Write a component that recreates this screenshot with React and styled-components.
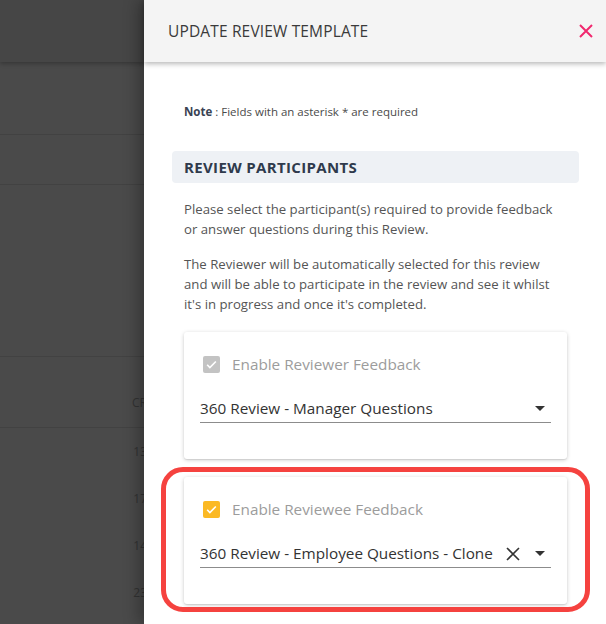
import React from "react";
import styled, { createGlobalStyle } from "styled-components";

const Global = createGlobalStyle`
  html, body { margin: 0; padding: 0; }
  body {
    width: 606px;
    height: 624px;
    overflow: hidden;
    font-family: "Open Sans", "Noto Sans", sans-serif;
    background: #4a4a4a;
  }
  * { box-sizing: border-box; }
`;

const Screen = styled.div`
  display: flex;
  width: 606px;
  height: 624px;
  overflow: hidden;
`;

const Backdrop = styled.div`
  width: 144px;
  flex: none;
  display: flex;
  flex-direction: column;
  background: #4a4a4a;
`;

const BgRow = styled.div`
  height: ${(p) => p.$h}px;
  flex: none;
  border-bottom: 1px solid ${(p) => (p.$line ? "#424242" : "transparent")};
  background: ${(p) => p.$bg || "transparent"};
  box-shadow: ${(p) => (p.$shadow ? "0 2px 4px rgba(0,0,0,0.25)" : "none")};
  display: flex;
  align-items: center;
  justify-content: flex-end;
  padding-top: ${(p) => p.$pt || 0}px;
  font-size: 12px;
  color: #3a3a3a;
  overflow: hidden;
  white-space: nowrap;
`;

const BgText = styled.span`
  margin-right: -3px;
  color: #333;
`;

const Drawer = styled.div`
  flex: 1;
  background: #fff;
  display: flex;
  flex-direction: column;
  box-shadow: -6px 0 14px rgba(0, 0, 0, 0.28);
  position: relative;
  z-index: 1;
`;

const Header = styled.div`
  height: 62px;
  flex: none;
  background: #f4f4f4;
  display: flex;
  align-items: center;
  justify-content: space-between;
  padding: 0 8px 0 24px;
  box-shadow: 0 2px 5px rgba(0, 0, 0, 0.28);
  position: relative;
  z-index: 1;
`;

const Title = styled.h1`
  margin: 0;
  font-size: 15.5px;
  font-weight: 400;
  color: #3a3a3a;
  letter-spacing: 0.15px;
`;

const CloseBtn = styled.button`
  border: 0;
  background: none;
  padding: 0;
  width: 24px;
  height: 24px;
  display: flex;
  align-items: center;
  justify-content: center;
  cursor: pointer;
`;

const Body = styled.div`
  padding: 41px 27px 0 28px;
  display: flex;
  flex-direction: column;
`;

const Note = styled.p`
  margin: 0 0 0 12px;
  font-size: 11.5px;
  line-height: 17px;
  color: #4a4a4a;
  b { color: #3a4354; font-weight: 700; }
`;

const SectionHead = styled.div`
  margin-top: 31px;
  height: 32px;
  background: #eef1f5;
  border-radius: 4px;
  display: flex;
  align-items: center;
  padding-left: 12px;
  font-size: 15px;
  font-weight: 700;
  color: #2f3a4c;
  letter-spacing: 0.35px;
`;

const Para = styled.p`
  margin: ${(p) => p.$mt}px 0 0 12px;
  max-width: 374px;
  font-size: 13.2px;
  line-height: 20px;
  color: #555;
`;

const Cards = styled.div`
  margin: 18px 12px 0 12px;
  display: flex;
  flex-direction: column;
  gap: 18px;
`;

const Card = styled.div`
  position: relative;
  height: 127px;
  background: #fff;
  border-radius: 3px;
  box-shadow: 0 1px 4px rgba(0, 0, 0, 0.2), 0 1px 1px rgba(0, 0, 0, 0.08);
  padding: 23px 16px 0 16px;
  display: flex;
  flex-direction: column;
  ${(p) =>
    p.$highlight &&
    `
    &::after {
      content: "";
      position: absolute;
      top: -10px;
      left: -23px;
      right: -23px;
      bottom: -8px;
      border: 5px solid #f5423f;
      border-radius: 22px;
      pointer-events: none;
    }
  `}
`;

const CheckRow = styled.label`
  display: flex;
  align-items: center;
  height: 18px;
  padding-left: 3px;
  gap: 12px;
`;

const Box = styled.span`
  width: 17px;
  height: 17px;
  border-radius: 2px;
  background: ${(p) => (p.$disabled ? "#c3c3c3" : "#fbb924")};
  display: flex;
  align-items: center;
  justify-content: center;
  flex: none;
`;

const CheckLabel = styled.span`
  font-size: 15.3px;
  color: #9c9c9c;
`;

const Select = styled.div`
  margin-top: 26px;
  height: 24px;
  border-bottom: 1px solid #8c8c8c;
  display: flex;
  align-items: flex-start;
  padding-bottom: 4px;
`;

const SelectValue = styled.span`
  flex: 1;
  font-size: 15.3px;
  line-height: 19px;
  color: #333;
  white-space: nowrap;
`;

const IconSlot = styled.span`
  display: flex;
  align-items: center;
  justify-content: center;
  width: ${(p) => p.$w}px;
  height: 19px;
  margin-right: ${(p) => p.$mr || 0}px;
  flex: none;
`;

const Check = () => (
  <svg width="13" height="13" viewBox="0 0 24 24">
    <path d="M4 12.5l5 5L20 6.5" fill="none" stroke="#fff" strokeWidth="3" />
  </svg>
);

const Arrow = () => (
  <svg width="10" height="5" viewBox="0 0 10 5">
    <path d="M0 0h10L5 5z" fill="#333" />
  </svg>
);

const Clear = () => (
  <svg width="14" height="14" viewBox="0 0 14 14">
    <path d="M1 1l12 12M13 1L1 13" stroke="#333" strokeWidth="1.6" />
  </svg>
);

const ParticipantCard = ({ label, value, disabled, clearable, highlight }) => (
  <Card $highlight={highlight}>
    <CheckRow>
      <Box $disabled={disabled}>
        <Check />
      </Box>
      <CheckLabel>{label}</CheckLabel>
    </CheckRow>
    <Select>
      <SelectValue>{value}</SelectValue>
      {clearable && (
        <IconSlot $w={14} $mr={15}>
          <Clear />
        </IconSlot>
      )}
      <IconSlot $w={10} $mr={6}>
        <Arrow />
      </IconSlot>
    </Select>
  </Card>
);

export default function App() {
  return (
    <>
      <Global />
      <Screen>
        <Backdrop>
          <BgRow $h={62} $bg="#464646" $shadow />
          <BgRow $h={73} $line />
          <BgRow $h={50} $line />
          <BgRow $h={172} $line />
          <BgRow $h={71} $line $pt={20}>
            <BgText>CR</BgText>
          </BgRow>
          <BgRow $h={47}>
            <BgText>13</BgText>
          </BgRow>
          <BgRow $h={47}>
            <BgText>17</BgText>
          </BgRow>
          <BgRow $h={47}>
            <BgText>14</BgText>
          </BgRow>
          <BgRow $h={47}>
            <BgText>23</BgText>
          </BgRow>
        </Backdrop>
        <Drawer>
          <Header>
            <Title>UPDATE REVIEW TEMPLATE</Title>
            <CloseBtn aria-label="Close">
              <svg width="14" height="14" viewBox="0 0 14 14">
                <path d="M1 1l12 12M13 1L1 13" stroke="#f0286e" strokeWidth="2" />
              </svg>
            </CloseBtn>
          </Header>
          <Body>
            <Note>
              <b>Note</b> : Fields with an asterisk * are required
            </Note>
            <SectionHead>REVIEW PARTICIPANTS</SectionHead>
            <Para $mt={16}>
              Please select the participant(s) required to provide feedback or answer questions during this Review.
            </Para>
            <Para $mt={15}>
              The Reviewer will be automatically selected for this review and will be able to participate in the review and see it whilst it's in progress and once it's completed.
            </Para>
            <Cards>
              <ParticipantCard
                disabled
                label="Enable Reviewer Feedback"
                value="360 Review - Manager Questions"
              />
              <ParticipantCard
                highlight
                clearable
                label="Enable Reviewee Feedback"
                value="360 Review - Employee Questions - Clone"
              />
            </Cards>
          </Body>
        </Drawer>
      </Screen>
    </>
  );
}
